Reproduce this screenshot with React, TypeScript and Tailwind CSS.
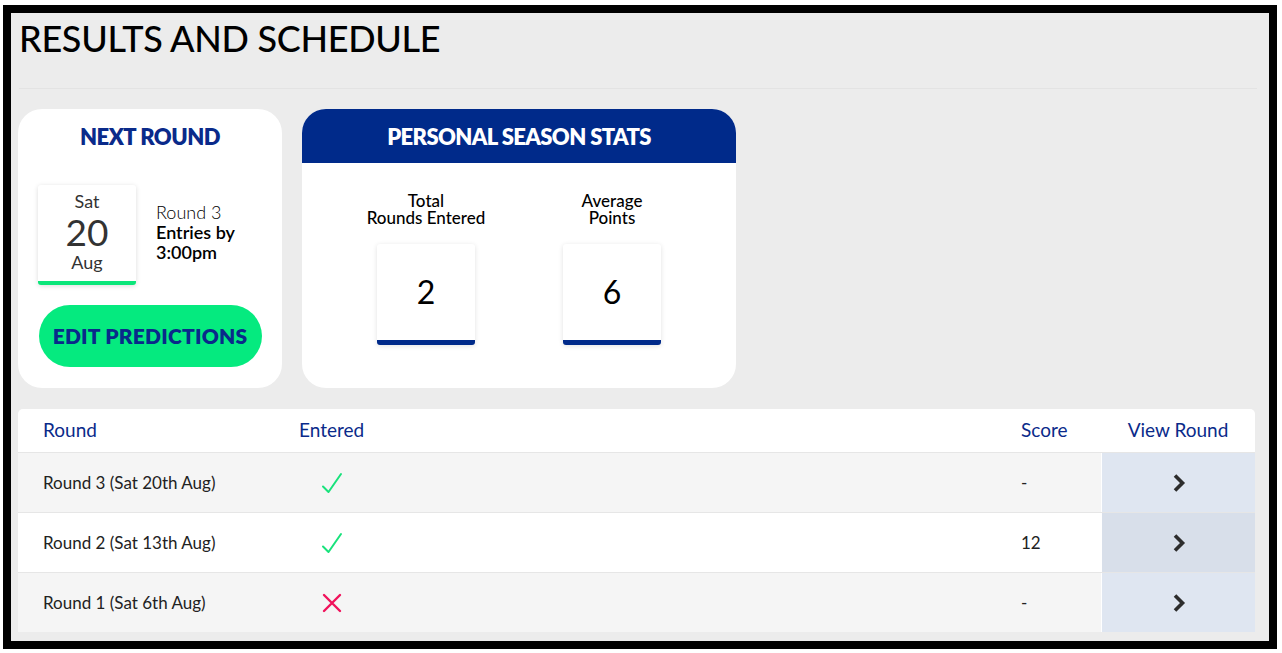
import React from "react";

const NAVY = "#0a2a8a";

function Check() {
  return (
    <svg width="22" height="22" viewBox="0 0 22 22" fill="none">
      <path d="M2 14.5 L7.5 20 L20 2" stroke="#19e27c" strokeWidth="2" strokeLinecap="round" strokeLinejoin="round" />
    </svg>
  );
}

function Cross() {
  return (
    <svg width="22" height="22" viewBox="0 0 22 22" fill="none">
      <path d="M3 3 L19 19 M19 3 L3 19" stroke="#f0125b" strokeWidth="2.4" strokeLinecap="round" />
    </svg>
  );
}

function Chevron() {
  return (
    <svg width="16" height="20" viewBox="0 0 16 20" fill="none">
      <path d="M4 2.5 L11.5 10 L4 17.5" stroke="#2d2d2d" strokeWidth="3.6" strokeLinecap="butt" strokeLinejoin="miter" />
    </svg>
  );
}

const rows = [
  { name: "Round 3 (Sat 20th Aug)", entered: true, score: "-", bg: "bg-[#f5f5f5]", view: "bg-[#dfe6f1]" },
  { name: "Round 2 (Sat 13th Aug)", entered: true, score: "12", bg: "bg-white", view: "bg-[#d8dfea]" },
  { name: "Round 1 (Sat 6th Aug)", entered: false, score: "-", bg: "bg-[#f5f5f5]", view: "bg-[#dfe6f1]" },
];

export default function App() {
  return (
    <div className="w-[1282px] h-[653px] bg-white pl-[3px] pt-[5px]" style={{ fontFamily: "Lato, 'Noto Sans', sans-serif" }}>
      <div className="w-[1274px] h-[644px] border-[8px] border-black bg-[#ececec] flex flex-col">
        <h1 className="pl-[8px] pt-[1px] text-[36px] leading-[48px] font-medium text-black tracking-[-0.3px]">
          RESULTS AND SCHEDULE
        </h1>
        <div className="ml-[8px] mr-[12px] mt-[26px] h-px bg-[#e3e3e3]" />
        <div className="flex gap-[20px] pl-[7px] mt-[20px]">
          <div className="w-[264px] h-[279px] bg-white rounded-[24px] flex flex-col items-center">
            <div className="mt-[11px] text-[22px] font-extrabold tracking-[-0.5px]" style={{ color: NAVY }}>NEXT ROUND</div>
            <div className="w-full flex items-center pl-[20px] mt-[32px]">
              <div className="w-[98px] h-[100px] bg-white rounded-[3px] shadow-[0_1px_5px_rgba(0,0,0,0.14)] border-b-[4px] border-[#0be67a] flex flex-col items-center text-[#333] pt-[6px]">
                <div className="text-[18px] leading-[21px]">Sat</div>
                <div className="text-[37px] leading-[40px]">20</div>
                <div className="text-[18px] leading-[21px]">Aug</div>
              </div>
              <div className="ml-[20px] text-[18px] leading-[20px] text-black -mt-[6px]">
                <div className="font-light">Round 3</div>
                <div className="font-semibold">Entries by</div>
                <div className="font-semibold">3:00pm</div>
              </div>
            </div>
            <button className="mt-[20px] w-[223px] h-[62px] rounded-full bg-[#05ea7f] text-[21px] font-extrabold tracking-[0.2px]" style={{ color: NAVY }}>
              EDIT PREDICTIONS
            </button>
          </div>
          <div className="w-[434px] h-[279px] bg-white rounded-[24px] overflow-hidden flex flex-col">
            <div className="h-[54px] bg-[#002a8a] flex items-center justify-center text-white text-[22px] font-extrabold tracking-[-0.6px]">
              PERSONAL SEASON STATS
            </div>
            <div className="grid grid-cols-2 px-[31px] mt-[29px]">
              {[
                { l1: "Total", l2: "Rounds Entered", v: "2" },
                { l1: "Average", l2: "Points", v: "6" },
              ].map((s) => (
                <div key={s.l1} className="flex flex-col items-center">
                  <div className="text-[17px] leading-[17px] font-medium text-black text-center">
                    <div>{s.l1}</div>
                    <div>{s.l2}</div>
                  </div>
                  <div className="mt-[18px] w-[98px] h-[101px] bg-white rounded-[3px] shadow-[0_1px_5px_rgba(0,0,0,0.12)] border-b-[5px] border-[#002a8a] flex items-center justify-center text-[32px] text-black">
                    {s.v}
                  </div>
                </div>
              ))}
            </div>
          </div>
        </div>
        <div className="ml-[7px] mr-[14px] mt-[21px] rounded-t-[5px] overflow-hidden bg-white">
          <div className="grid grid-cols-[281px_1fr_80px_154px] h-[43px] items-center text-[19px]" style={{ color: NAVY }}>
            <div className="pl-[25px]">Round</div>
            <div>Entered</div>
            <div>Score</div>
            <div className="text-center">View Round</div>
          </div>
          {rows.map((r) => (
            <div key={r.name} className={`grid grid-cols-[281px_1fr_80px_154px] h-[60px] border-t border-[#e6e6e6] ${r.bg}`}>
              <div className="pl-[25px] flex items-center text-[17px] text-[#222]">{r.name}</div>
              <div className="flex items-center pl-[22px]">{r.entered ? <Check /> : <Cross />}</div>
              <div className="flex items-center text-[17px] text-[#222]">{r.score}</div>
              <div className={`flex items-center justify-center border-l border-white ${r.view}`}>
                <Chevron />
              </div>
            </div>
          ))}
        </div>
      </div>
    </div>
  );
}
